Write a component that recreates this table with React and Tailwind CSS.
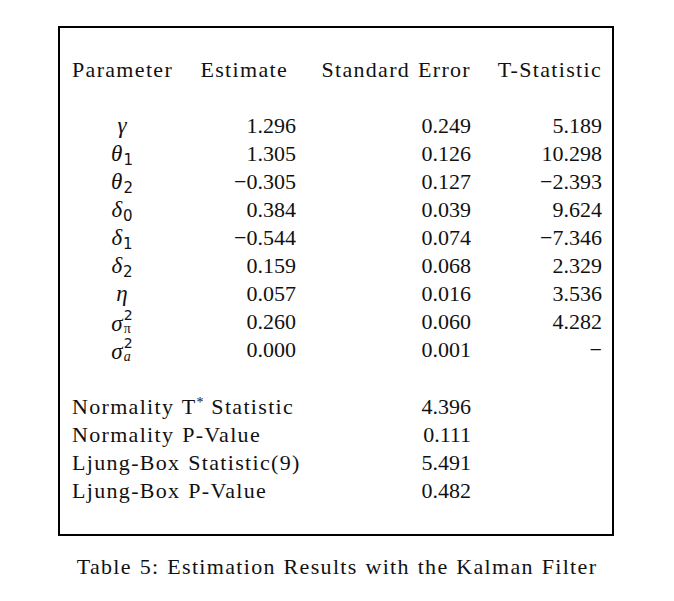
import React from 'react';

const params = [
  { sym: 'γ', est: '1.296', se: '0.249', t: '5.189' },
  { sym: 'θ', sub: '1', est: '1.305', se: '0.126', t: '10.298' },
  { sym: 'θ', sub: '2', est: '−0.305', se: '0.127', t: '−2.393' },
  { sym: 'δ', sub: '0', est: '0.384', se: '0.039', t: '9.624' },
  { sym: 'δ', sub: '1', est: '−0.544', se: '0.074', t: '−7.346' },
  { sym: 'δ', sub: '2', est: '0.159', se: '0.068', t: '2.329' },
  { sym: 'η', est: '0.057', se: '0.016', t: '3.536' },
  { sym: 'σ', sup: '2', sub: 'π', est: '0.260', se: '0.060', t: '4.282' },
  { sym: 'σ', sup: '2', sub: 'a', est: '0.000', se: '0.001', t: '−' },
];

const diagnostics = [
  { label: 'Normality T', star: true, rest: ' Statistic', value: '4.396' },
  { label: 'Normality P-Value', value: '0.111' },
  { label: 'Ljung-Box Statistic(9)', value: '5.491' },
  { label: 'Ljung-Box P-Value', value: '0.482' },
];

const rowCls = 'grid grid-cols-[100px_124px_175px_131px] h-[28px] leading-[28px]';
const wordy = 'tracking-[0.06em] [word-spacing:1px]';

const Symbol = ({ sym, sub, sup }) => {
  if (sup) {
    return (
      <span className="inline-flex items-center h-[28px]">
        <span className="italic text-[23px] pt-[3px]">{sym}</span>
        <span className="inline-flex flex-col ml-[1px]">
          <span className="text-[14px] leading-[13px] font-['DejaVu_Sans',sans-serif]">{sup}</span>
          <span className={`text-[14px] leading-[13px] ${sub === 'π' ? '' : 'italic'}`}>{sub}</span>
        </span>
      </span>
    );
  }
  return (
    <span className="inline-flex items-baseline">
      <span className="italic text-[23px]">{sym}</span>
      {sub && (
        <span className="text-[15px] leading-[15px] font-['DejaVu_Sans',sans-serif] relative top-[4px] ml-[1px]">{sub}</span>
      )}
    </span>
  );
};

export default function App() {
  return (
    <div className="w-[674px] h-[601px] bg-white text-[#111] font-['Liberation_Serif',serif] text-[22px]">
      <div className="pt-[26px] pl-[58px]">
        <div className="w-[556px] h-[510px] border-2 border-black pt-[28px] pl-[12px]">
          {/* Header */}
          <div className={`${rowCls} ${wordy}`}>
            <div className="whitespace-nowrap">Parameter</div>
            <div className="text-right pr-[8px]">Estimate</div>
            <div className="text-right whitespace-nowrap">Standard Error</div>
            <div className="text-right">T-Statistic</div>
          </div>
          <div className="h-[28px]" />

          {params.map((p, i) => (
            <div key={i} className={rowCls}>
              <div className="flex justify-center items-center">
                <Symbol sym={p.sym} sub={p.sub} sup={p.sup} />
              </div>
              <div className="text-right">{p.est}</div>
              <div className="text-right">{p.se}</div>
              <div className="text-right">{p.t}</div>
            </div>
          ))}

          <div className="h-[29px]" />

          {diagnostics.map((d, i) => (
            <div key={i} className={rowCls}>
              <div className={`col-span-2 whitespace-nowrap ${wordy}`}>
                {d.label}
                {d.star && <span className="text-[14px] relative -top-[7px] tracking-normal">*</span>}
                {d.rest}
              </div>
              <div className="text-right">{d.value}</div>
              <div />
            </div>
          ))}
        </div>
      </div>

      <div className={`mt-[17px] h-[28px] leading-[28px] text-center ${wordy}`}>
        Table 5: Estimation Results with the Kalman Filter
      </div>
    </div>
  );
}
